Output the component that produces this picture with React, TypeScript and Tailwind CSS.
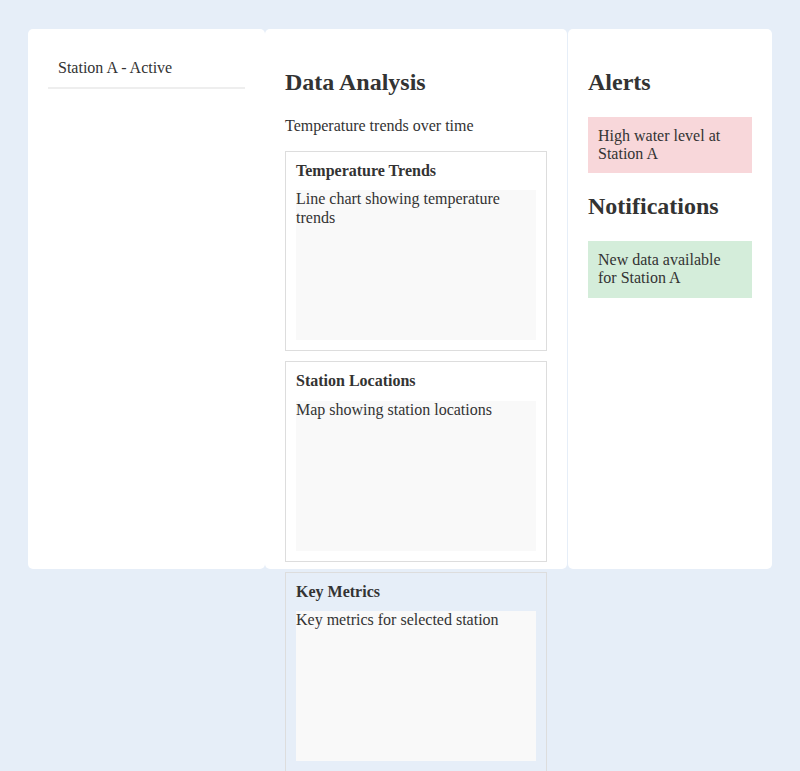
const cards = [
  { title: "Temperature Trends", body: "Line chart showing temperature trends" },
  { title: "Station Locations", body: "Map showing station locations" },
  { title: "Key Metrics", body: "Key metrics for selected station" },
];

const App = () => {
  return (
    <div className="min-h-screen bg-[#e6eef8] px-[28px] pt-[29px] text-[#333] font-['Liberation_Serif',serif] text-[16px]">
      <div className="flex h-[540px]">
        <aside className="w-[237px] bg-white rounded-[5px] p-5">
          <ul>
            <li className="p-[10px] leading-[18.4px] border-b-2 border-[#eee]">Station A - Active</li>
          </ul>
        </aside>

        <main className="w-[302px] mr-px bg-white rounded-[5px] p-5">
          <h2 className="text-[24px] font-bold mt-5 mb-5 leading-[27.6px]">Data Analysis</h2>
          <p className="leading-[18.4px] mb-4">Temperature trends over time</p>
          {cards.map((c) => (
            <div key={c.title} className="border border-[#ddd] p-[10px] mb-[10px]">
              <h3 className="font-bold leading-[18.4px] mb-[10px]">{c.title}</h3>
              <div className="h-[150px] bg-[#f9f9f9] leading-[18.4px]">{c.body}</div>
            </div>
          ))}
        </main>

        <aside className="w-[204px] bg-white rounded-[5px] p-5">
          <h2 className="text-[24px] font-bold mt-5 mb-5 leading-[27.6px]">Alerts</h2>
          <div className="bg-[#f8d7da] p-[10px] leading-[18.4px]">High water level at Station A</div>
          <h2 className="text-[24px] font-bold mt-5 mb-5 leading-[27.6px]">Notifications</h2>
          <div className="bg-[#d4edda] p-[10px] leading-[18.4px]">New data available for Station A</div>
        </aside>
      </div>
    </div>
  );
};

export default App;
